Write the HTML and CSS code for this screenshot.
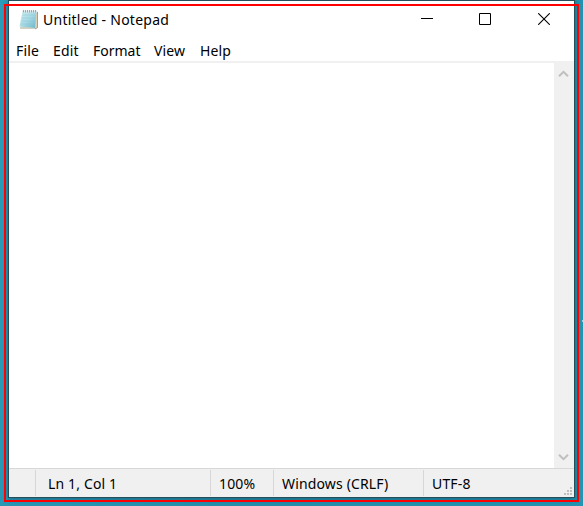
FILE: index.html
```html
<!DOCTYPE html>
<html lang="en">
<head>
<meta charset="utf-8">
<title>Untitled - Notepad</title>
<link rel="stylesheet" href="styles.css">
</head>
<body>
<main class="window">
  <header class="titlebar">
    <svg class="app-icon" width="20" height="21" viewBox="0 0 20 21" aria-hidden="true">
      <defs><linearGradient id="page" x1="0" y1="0" x2="1" y2="1"><stop offset="0" stop-color="#d3eff4"/><stop offset=".5" stop-color="#a9dae5"/><stop offset="1" stop-color="#69b5c8"/></linearGradient></defs>
      <path d="M17 2l2 1v16l-3 1H1l1-2z" fill="#d9d0b8"/>
      <path d="M18.500 3v15.500L16 20" fill="none" stroke="#b09d78"/>
      <path d="M3.500 2h14L16 19 .5 17.500z" fill="url(#page)"/>
      <path d="M3.500 6h13M3 9h13M2.500 12h13M2 15h13" stroke="#86c5d3" stroke-width=".5"/>
      <path d="M3.500 2.500H18" stroke="#dce9ec" stroke-width="2"/>
      <path d="M4.500 1v2.500M6.500 1v2.500M8.500 1v2.500M10.500 1v2.500M12.500 1v2.500M14.500 1v2.500M16.500 1v2.500" stroke="#87959a" stroke-width=".8"/>
      <path d="M1 18.500l15 1" stroke="#c3d2cd"/>
    </svg>
    <h1 class="title">Untitled - Notepad</h1>
    <div class="controls">
      <svg width="12" height="12" viewBox="0 0 12 12"><path d="M0 5.500h12" stroke="#000"/></svg>
      <svg width="12" height="12" viewBox="0 0 12 12"><path d="M.5.5h11v11H.5z" fill="none" stroke="#000"/></svg>
      <svg class="close" width="12" height="12" viewBox="0 0 12 12"><path d="M.2.2l11.600 11.600M11.800.2L.2 11.800" stroke="#000" stroke-width="1.100"/></svg>
    </div>
  </header>
  <nav class="menu"><span class="file">File</span><span class="edit">Edit</span><span class="format">Format</span><span class="view">View</span><span class="help">Help</span></nav>
  <section class="editor">
    <div class="page"></div>
    <div class="scrollbar">
      <svg width="11" height="8" viewBox="0 0 11 8"><path d="M1 6.200l4.500-4.400L10 6.200" fill="none" stroke="#bfbfbf" stroke-width="2"/></svg>
      <svg width="11" height="8" viewBox="0 0 11 8"><path d="M1 1.800l4.500 4.400L10 1.800" fill="none" stroke="#bfbfbf" stroke-width="2"/></svg>
    </div>
  </section>
  <footer class="status">
    <div class="cell"></div>
    <div class="cell position"><span>Ln 1, Col 1</span></div>
    <div class="cell zoom"><span>100%</span></div>
    <div class="cell ending"><span>Windows (CRLF)</span></div>
    <div class="cell encoding"><span>UTF-8</span></div>
    <svg class="grip" width="8" height="8" viewBox="0 0 8 8"><path d="M6 0h2v2H6zM3 3h2v2H3zM6 3h2v2H6zM0 6h2v2H0zM3 6h2v2H3zM6 6h2v2H6z" fill="#bfbfbf"/></svg>
  </footer>
</main>
<div class="outline"></div>
<i class="speck"></i>
</body>
</html>
```
FILE: styles.css
```css
* { box-sizing: border-box; }
body {
  margin: 0;
  height: 506px;
  padding: 0 8px;
  overflow: hidden;
  position: relative;
  background: linear-gradient(100deg, #2b9cb9, #258eaa 50%, #2494b0);
  color: #000;
  font: 14px/20px "Noto Sans", sans-serif;
}
svg { display: block; flex: none; }
.window {
  width: 567px;
  height: 498px;
  display: flex;
  flex-direction: column;
  border: 1px solid #264e5a;
  background: #fff;
  box-shadow: 0 1px 5px rgba(0, 40, 55, .45);
}
.titlebar { display: flex; height: 39px; padding-left: 10px; align-items: flex-start; }
.app-icon { margin-top: 8px; }
.title { margin: 9px 0 0 4px; font-size: 14px; font-weight: 400; letter-spacing: .25px; white-space: nowrap; }
.controls { display: flex; gap: 46px; margin: 12px 24px 0 auto; }
.close { margin-left: 1px; }
.menu { display: flex; height: 23px; padding: 1px 0 0 7px; border-bottom: 2px solid #f0f0f0; letter-spacing: .15px; white-space: nowrap; }
.menu span { flex: none; }
.file { width: 37px; }
.edit { width: 40px; }
.format { width: 61px; letter-spacing: 0; }
.view { width: 46px; }
.editor { display: flex; height: 405px; }
.page { flex: 1; }
.scrollbar {
  width: 20px;
  padding: 7px 1px 7px 0;
  display: flex;
  flex-direction: column;
  justify-content: space-between;
  align-items: center;
  background: #f0f0f0;
}
.scrollbar svg { margin-right: 1px; }
.status {
  flex: 1;
  display: flex;
  padding-top: 1px;
  border-top: 1px solid #d7d7d7;
  background: #f0f0f0;
  white-space: nowrap;
}
.cell { width: 27px; height: 26px; padding-top: 4px; border-right: 1px solid #d7d7d7; letter-spacing: .15px; }
.position { width: 175px; padding-left: 12px; }
.zoom { width: 63px; padding-left: 8px; }
.ending { width: 150px; padding-left: 8px; }
.encoding { flex: 1; padding-left: 8px; border: 0; }
.grip { align-self: flex-end; margin: 0 2px 2px 0; }
.outline {
  position: absolute;
  left: 4px;
  top: 4px;
  width: 575px;
  height: 498px;
  border: 2px solid #f00;
}
.speck { position: absolute; right: 0; top: 320px; width: 1px; height: 2px; background: #a5d2df; }
```
